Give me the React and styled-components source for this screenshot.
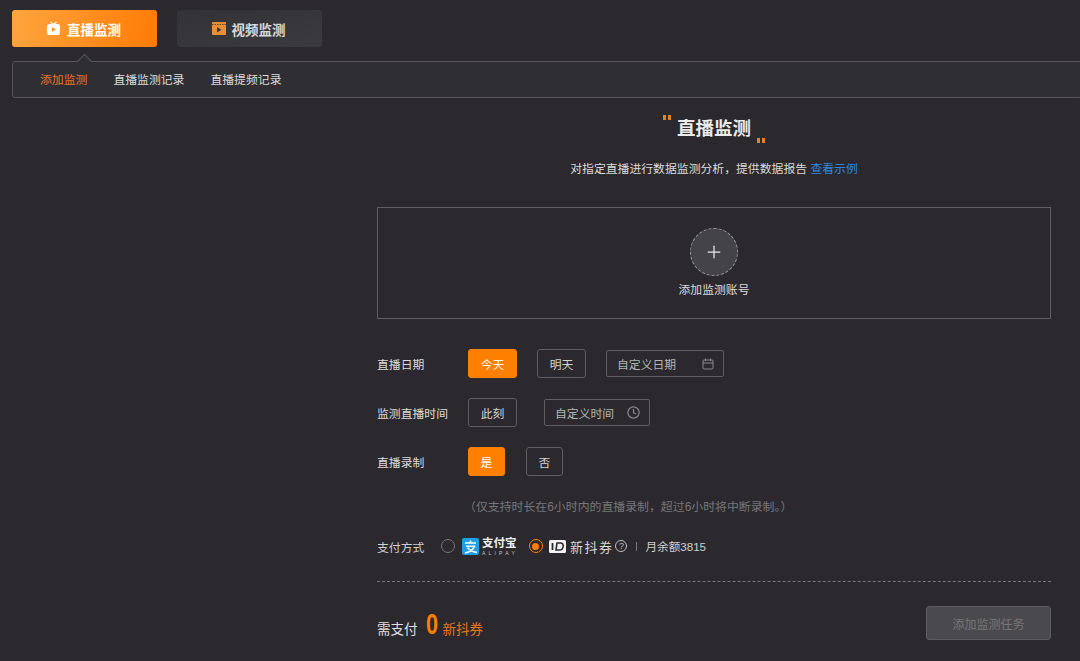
import styled, { createGlobalStyle } from "styled-components";
import { Plus } from "lucide-react";

const GlobalStyle = createGlobalStyle`
  html, body {
    margin: 0;
    padding: 0;
    background: #2b292d;
  }
  body {
    font-family: "Liberation Sans", "Noto Sans CJK SC", sans-serif;
    color: #e6e6e6;
    overflow: hidden;
  }
`;

const Page = styled.div`
  width: 1080px;
  height: 661px;
  overflow: hidden;
  box-sizing: border-box;
  padding-top: 10px;
  background: #2b292d;
`;

const Tabs = styled.div`
  display: flex;
  gap: 20px;
  margin-left: 12px;
`;

const Tab = styled.div`
  width: 145px;
  height: 37px;
  box-sizing: border-box;
  padding-right: 2px;
  display: flex;
  align-items: center;
  justify-content: center;
  gap: 6px;
  border-radius: 3px;
  font-size: 13.5px;
  font-weight: 700;
  color: ${({ active }) => (active ? "#fff" : "#d8d8d8")};
  background: ${({ active }) =>
    active
      ? "linear-gradient(100deg, #ffa53e, #ff7b05)"
      : "linear-gradient(170deg, #333236, #3b3a3e)"};
`;

const SubNav = styled.div`
  position: relative;
  margin: 14px -2px 0 12px;
  height: 37px;
  box-sizing: border-box;
  border: 1px solid #58575b;
  border-radius: 3px;
  background: #2f2e32;
  display: flex;
  align-items: center;
  gap: 26px;
  padding: 0 0 2px 27px;
  font-size: 11.85px;

  &::before {
    content: "";
    position: absolute;
    left: 66px;
    top: -6px;
    width: 10px;
    height: 10px;
    background: #2f2e32;
    border-left: 1px solid #58575b;
    border-top: 1px solid #58575b;
    transform: rotate(45deg);
  }
`;

const NavItem = styled.span`
  color: ${({ active }) => (active ? "#f0702a" : "#dcdcdc")};
`;

const Content = styled.div`
  width: 674px;
  margin-left: 377px;
`;

const Heading = styled.h1`
  margin: 18px 0 0;
  height: 26px;
  display: flex;
  justify-content: center;
  gap: 6px;
  font-size: 18.5px;
  line-height: 26px;
  font-weight: 700;
  color: #ececec;
`;

const Quote = styled.i`
  display: block;
  width: 8px;
  height: 5px;
  margin-top: ${({ low }) => (low ? "22px" : "-1px")};
  background: linear-gradient(
    90deg,
    #e8821e 0 3px,
    transparent 3px 5px,
    #e8821e 5px 8px
  );
`;

const Intro = styled.p`
  margin: 18px 0 0;
  font-size: 11.85px;
  line-height: 18px;
  text-align: center;
  color: #dcdcdc;
`;

const ExampleLink = styled.a`
  color: #2f86e0;
`;

const AddBox = styled.div`
  margin-top: 29px;
  height: 112px;
  box-sizing: border-box;
  border: 1px solid #5f5e62;
  display: flex;
  flex-direction: column;
  align-items: center;
  padding-top: 20px;
  font-size: 11.85px;
  color: #dcdcdc;
`;

const AddCircle = styled.div`
  width: 48px;
  height: 48px;
  box-sizing: border-box;
  border: 1px dashed #9a999c;
  border-radius: 50%;
  background: #444347;
  display: flex;
  align-items: center;
  justify-content: center;
  color: #e8e8e8;
  margin-bottom: 4px;
`;

const Row = styled.div`
  display: flex;
  align-items: center;
  height: 29px;
  margin-top: ${({ top }) => top}px;
  font-size: 11.85px;
`;

const Label = styled.span`
  width: 91px;
  color: #dcdcdc;
`;

const Choice = styled.div`
  width: ${({ wide }) => wide || 49}px;
  height: 29px;
  margin-right: ${({ after }) => after || 20}px;
  box-sizing: border-box;
  border: 1px solid ${({ active }) => (active ? "#ff7f00" : "#5f5e62")};
  border-radius: 3px;
  background: ${({ active }) => (active ? "#ff7f00" : "transparent")};
  color: ${({ active }) => (active ? "#fff" : "#d4d4d4")};
  display: flex;
  align-items: center;
  justify-content: center;
`;

const Picker = styled.div`
  width: ${({ wide }) => wide}px;
  height: 27px;
  box-sizing: border-box;
  border: 1px solid #5f5e62;
  border-radius: 2px;
  padding: 0 9px 0 10px;
  margin-left: ${({ shift }) => shift || 0}px;
  display: flex;
  align-items: center;
  justify-content: space-between;
  color: #b4b4b4;
`;

const Note = styled.p`
  margin: 22px 0 0 87px;
  font-size: 11.9px;
  line-height: 18px;
  color: #77767a;
`;

const PayRow = styled.div`
  display: flex;
  align-items: center;
  height: 20px;
  margin-top: 20px;
  font-size: 11.6px;
  color: #d0d0d0;
`;

const PayLabel = styled.span`
  width: 64px;
  font-size: 11.85px;
`;

const Radio = styled.span`
  width: 14px;
  height: 14px;
  box-sizing: border-box;
  border-radius: 50%;
  border: ${({ checked }) =>
    checked ? "1.5px solid #ff7f00" : "1px solid #77767a"};
  display: flex;
  align-items: center;
  justify-content: center;
  margin-right: ${({ gap }) => gap}px;

  &::after {
    content: "";
    display: ${({ checked }) => (checked ? "block" : "none")};
    width: 7px;
    height: 7px;
    border-radius: 50%;
    background: #ff7f00;
  }
`;

const AlipayWords = styled.div`
  display: flex;
  flex-direction: column;
  margin: 0 11px 0 3px;
`;

const AlipayName = styled.span`
  font-size: 11.5px;
  line-height: 13px;
  font-weight: 700;
  color: #f0f0f0;
`;

const AlipayEn = styled.span`
  font-size: 5px;
  line-height: 6px;
  letter-spacing: 3.2px;
  color: #c8c8c8;
`;

const CouponName = styled.span`
  margin-left: 4px;
  font-size: 13px;
  letter-spacing: 1.5px;
  font-family: "Noto Sans CJK SC", serif;
  color: #d8d8d8;
`;

const Help = styled.span`
  width: 12px;
  height: 12px;
  margin-left: 2px;
  box-sizing: border-box;
  border: 1px solid #bdbdbd;
  border-radius: 50%;
  font-size: 9px;
  line-height: 10px;
  text-align: center;
  color: #bdbdbd;
`;

const Divider = styled.span`
  width: 1px;
  height: 9px;
  margin: 0 8px 0 9px;
  background: #77767a;
`;

const DashedLine = styled.div`
  margin-top: 25px;
  border-top: 1px dashed #77767a;
`;

const Footer = styled.div`
  margin-top: 24px;
  display: flex;
  align-items: center;
  justify-content: space-between;
`;

const Total = styled.div`
  display: flex;
  align-items: baseline;
  font-size: 13.5px;
  color: #e0e0e0;
`;

const Amount = styled.span`
  display: inline-block;
  margin: 0 4px 0 8px;
  font-size: 30px;
  font-weight: 700;
  line-height: 33px;
  transform: scaleX(0.72);
  transform-origin: left center;
  width: 13px;
  color: #ff7f00;
`;

const Unit = styled.span`
  color: #e8761e;
`;

const SubmitButton = styled.button`
  width: 125px;
  height: 34px;
  border: 1px solid #5c5b5f;
  border-radius: 3px;
  background: #4a494d;
  color: #77767a;
  font: inherit;
  font-size: 12px;
`;

const LiveIcon = () => (
  <svg width="15" height="15" viewBox="0 0 15 15">
    <path d="M4.5 1 7.5 3.4 10.5 1" fill="none" stroke="#fff" strokeWidth="1.3" />
    <rect x="1" y="3" width="13" height="11" rx="2.2" fill="#fff" />
    <path d="M6 6.2 10 8.5 6 10.8Z" fill="#ff8f1f" />
  </svg>
);

const VideoIcon = () => (
  <svg width="14" height="13" viewBox="0 0 14 13">
    <rect width="14" height="13" rx="1" fill="#e99034" />
    <path d="M0 2.5H14" stroke="#3a393d" strokeWidth="0.8" strokeDasharray="1.5 1" />
    <path d="M5 5 9.5 7.7 5 10.4Z" fill="#3a393d" />
  </svg>
);

const CalendarIcon = () => (
  <svg width="12" height="12" viewBox="0 0 12 12" fill="none" stroke="#8a898c">
    <rect x="1" y="2" width="10" height="9" rx="1" />
    <path d="M1 5H11M3.5 .5V3M8.5 .5V3" />
  </svg>
);

const ClockIcon = () => (
  <svg width="13" height="13" viewBox="0 0 13 13" fill="none" stroke="#8a898c" strokeWidth="1.2">
    <circle cx="6.5" cy="6.5" r="5.6" />
    <path d="M6.5 3V6.8L9 8" />
  </svg>
);

const AlipayIcon = () => (
  <svg width="17" height="17" viewBox="0 0 17 17">
    <rect width="17" height="17" rx="2" fill="#1f9ee6" />
    <path
      d="M3 5H14M8.5 2.5V5M4 8.3H12.5C11.5 11.5 8.5 14 3 15M5.5 9.5C7.5 12.5 11 13.8 15 14.5"
      fill="none"
      stroke="#fff"
      strokeWidth="1.5"
    />
  </svg>
);

const CouponIcon = () => (
  <svg width="17" height="13" viewBox="0 0 17 13">
    <rect width="17" height="13" rx="1.5" fill="#f2f2f2" />
    <path d="M3.5 3V10" stroke="#2b292d" strokeWidth="1.8" />
    <path
      d="M8 3H11.5C13.5 3 14.5 4.5 14.2 6.5 13.9 8.7 12.5 10 10.5 10H7Z"
      fill="none"
      stroke="#2b292d"
      strokeWidth="1.6"
    />
  </svg>
);

const App = () => (
  <Page>
    <GlobalStyle />
    <Tabs>
      <Tab active>
        <LiveIcon />
        直播监测
      </Tab>
      <Tab>
        <VideoIcon />
        视频监测
      </Tab>
    </Tabs>
    <SubNav>
      <NavItem active>添加监测</NavItem>
      <NavItem>直播监测记录</NavItem>
      <NavItem>直播提频记录</NavItem>
    </SubNav>
    <Content>
      <Heading>
        <Quote />
        直播监测
        <Quote low />
      </Heading>
      <Intro>
        对指定直播进行数据监测分析，提供数据报告 <ExampleLink>查看示例</ExampleLink>
      </Intro>
      <AddBox>
        <AddCircle>
          <Plus size={20} strokeWidth={1.5} />
        </AddCircle>
        添加监测账号
      </AddBox>
      <Row top={30}>
        <Label>直播日期</Label>
        <Choice active>今天</Choice>
        <Choice>明天</Choice>
        <Picker wide={118}>
          自定义日期
          <CalendarIcon />
        </Picker>
      </Row>
      <Row top={20}>
        <Label>监测直播时间</Label>
        <Choice>此刻</Choice>
        <Picker wide={106} shift={7}>
          自定义时间
          <ClockIcon />
        </Picker>
      </Row>
      <Row top={20}>
        <Label>直播录制</Label>
        <Choice active wide={37} after={21}>是</Choice>
        <Choice wide={37}>否</Choice>
      </Row>
      <Note>（仅支持时长在6小时内的直播录制，超过6小时将中断录制。）</Note>
      <PayRow>
        <PayLabel>支付方式</PayLabel>
        <Radio gap={7} />
        <AlipayIcon />
        <AlipayWords>
          <AlipayName>支付宝</AlipayName>
          <AlipayEn>ALIPAY</AlipayEn>
        </AlipayWords>
        <Radio checked gap={6} />
        <CouponIcon />
        <CouponName>新抖券</CouponName>
        <Help>?</Help>
        <Divider />
        月余额3815
      </PayRow>
      <DashedLine />
      <Footer>
        <Total>
          需支付
          <Amount>0</Amount>
          <Unit>新抖券</Unit>
        </Total>
        <SubmitButton disabled>添加监测任务</SubmitButton>
      </Footer>
    </Content>
  </Page>
);

export default App;
